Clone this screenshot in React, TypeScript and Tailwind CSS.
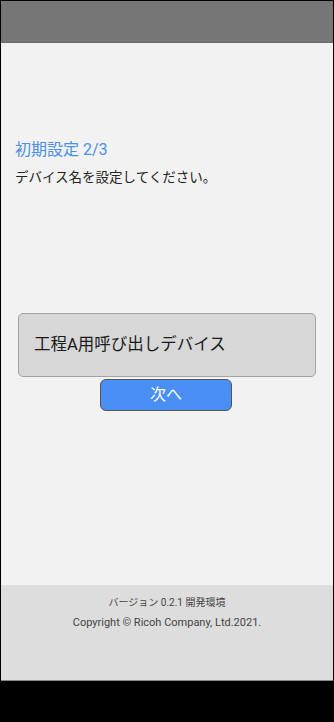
export default function App() {
  return (
    <div className="w-[334px] h-[722px] flex flex-col bg-black font-['Roboto','Noto_Sans_CJK_JP',sans-serif]">
      <div className="flex flex-col flex-1 border-x border-t border-black">
        <div className="h-[42px] bg-[#767676] border-b border-[#6a6a6a]" />
        <main className="flex-1 bg-[#f2f2f2] px-[14px] pt-[95px]">
          <h1 className="text-[16px] leading-[24px] text-[#4a90e8]">初期設定 2/3</h1>
          <p className="mt-[4px] text-[13.5px] leading-[22px] text-[#222]">デバイス名を設定してください。</p>
          <div className="mt-[125px] px-[3px]">
            <div className="h-[64px] flex items-center px-[15px] bg-[#d7d7d7] border border-[#a3a3a3] rounded-[5px] text-[16.5px] text-[#1a1a1a]">
              工程A用呼び出しデバイス
            </div>
            <div className="flex justify-center mt-[2px] pr-[2px]">
              <button className="w-[132px] h-[32px] rounded-[6px] bg-[#4a8ff4] border-[1.5px] border-[#555] text-white text-[16px] leading-none">
                次へ
              </button>
            </div>
          </div>
        </main>
        <footer className="h-[96px] bg-[#dddddd] border-b border-[#888] flex flex-col items-center pt-[8px] text-[#444]">
          <p className="text-[10px] leading-[20px]">バージョン 0.2.1 開発環境</p>
          <p className="text-[11px] leading-[20px]">Copyright © Ricoh Company, Ltd.2021.</p>
        </footer>
      </div>
      <div className="h-[41px] bg-black" />
    </div>
  );
}
